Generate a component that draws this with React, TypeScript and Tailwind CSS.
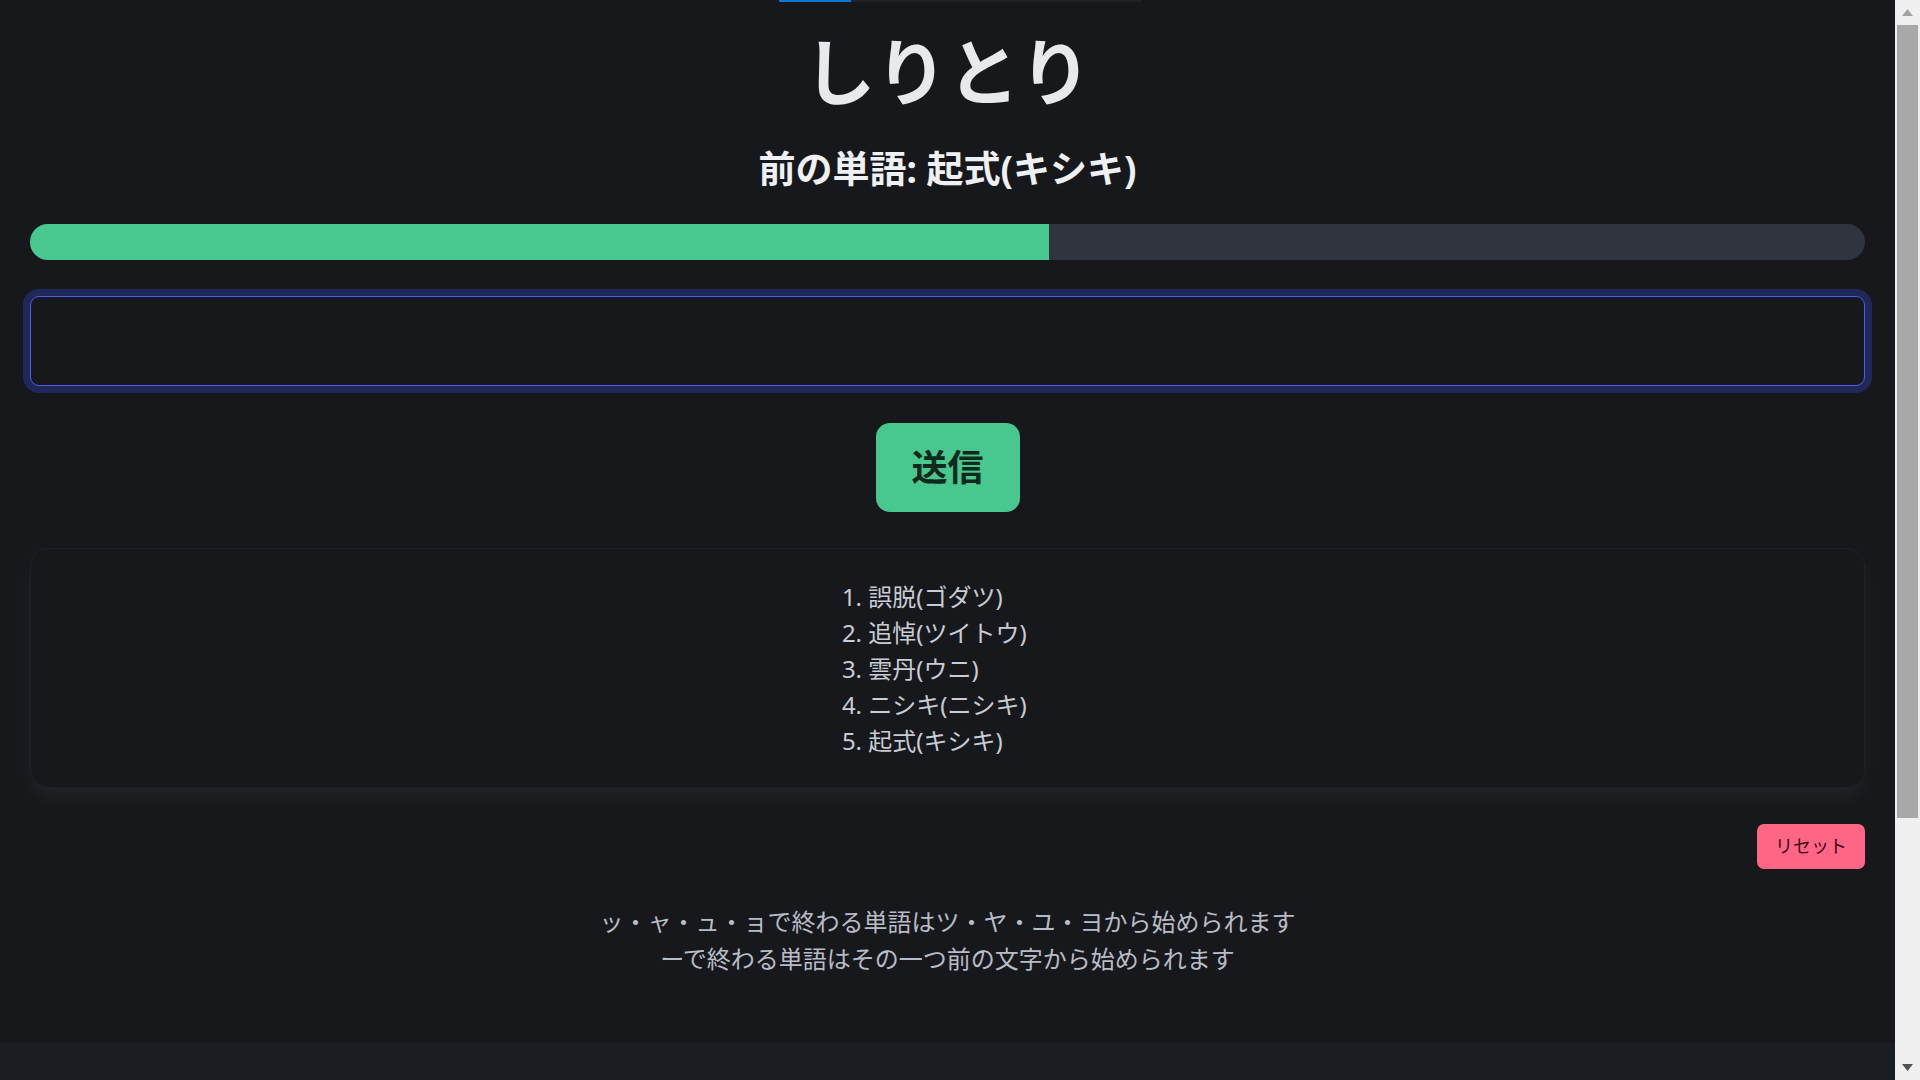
import React from "react";

const words = ["誤脱(ゴダツ)", "追悼(ツイトウ)", "雲丹(ウニ)", "ニシキ(ニシキ)", "起式(キシキ)"];

export default function App() {
  const font = { fontFamily: '"Noto Sans", "Noto Sans CJK JP", sans-serif' };
  return (
    <div className="flex h-screen w-full overflow-hidden bg-[#17181c]" style={font}>
      <div className="flex flex-1 flex-col">
        <div className="flex h-[2px] w-full">
          <div className="ml-[779px] h-full w-[72px] bg-[#0b78d6]" />
          <div className="h-full w-[290px] bg-[#222327]" />
        </div>
        <div className="flex flex-1 flex-col px-[30px]">
          <h1 className="mt-[33px] text-center text-[72px] font-semibold leading-none text-[#e8e9ed]">しりとり</h1>
          <h2 className="mt-[43px] text-center text-[37px] font-bold leading-none text-[#eef0f3]">前の単語: 起式(キシキ)</h2>
          <div className="mt-[37px] h-[36px] w-full overflow-hidden rounded-full bg-[#2f343f]">
            <div className="h-full bg-[#48c78e]" style={{ width: "55.55%" }} />
          </div>
          <input
            type="text"
            className="mt-[36px] h-[90px] w-full rounded-[9px] border border-[#4a5cf2] bg-[#17181c] px-4 text-[24px] text-[#e8e9ed] shadow-[0_0_0_7px_#20285a] outline-none"
          />
          <div className="mt-[37px] flex justify-center">
            <button className="flex h-[89px] w-[144px] items-center justify-center rounded-[14px] bg-[#48c78e] text-[36px] font-bold text-[#0f2a1d]">
              送信
            </button>
          </div>
          <div className="mt-[36px] flex justify-center rounded-[18px] border border-[#202126] bg-[#17181c] pt-[30px] pb-[28px] shadow-[0_10px_20px_-3px_rgba(255,255,255,0.06)]">
            <ol className="list-outside list-decimal pl-0 text-left text-[24px] leading-[36px] text-[#c8ccd4]">
              {words.map((w) => (
                <li key={w}>{w}</li>
              ))}
            </ol>
          </div>
          <div className="mt-[36px] flex justify-end">
            <button className="flex h-[45px] w-[108px] items-center justify-center rounded-[7px] bg-[#ff6685] text-[18px] text-[#3d0a14]">
              リセット
            </button>
          </div>
          <div className="mt-[34px] text-center text-[24px] leading-[37px] text-[#b8bcc6]">
            <p>ッ・ャ・ュ・ョで終わる単語はツ・ヤ・ユ・ヨから始められます</p>
            <p>ーで終わる単語はその一つ前の文字から始められます</p>
          </div>
        </div>
        <div className="h-[37px] w-full bg-[#1a1d21]" />
      </div>
      <div className="flex h-full w-[25px] flex-col items-center bg-[#f0f0f0]">
        <div className="flex h-[25px] w-full items-center justify-center">
          <svg width="11" height="7" viewBox="0 0 11 7">
            <polygon points="5.5,0 11,7 0,7" fill="#a3a3a3" />
          </svg>
        </div>
        <div className="h-[793px] w-[21px] bg-[#a8a8a8]" />
        <div className="flex-1" />
        <div className="flex h-[25px] w-full items-center justify-center">
          <svg width="11" height="7" viewBox="0 0 11 7">
            <polygon points="0,0 11,0 5.5,7" fill="#505050" />
          </svg>
        </div>
      </div>
    </div>
  );
}
